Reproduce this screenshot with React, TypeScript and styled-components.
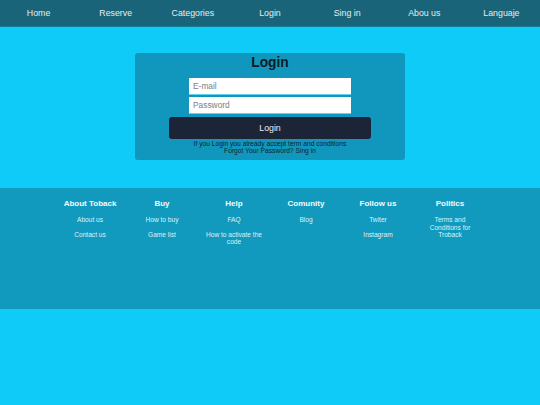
import React from "react";
import styled, { createGlobalStyle } from "styled-components";

const navItems = ["Home", "Reserve", "Categories", "Login", "Sing in", "Abou us", "Languaje"];

const footerColumns = [
  { title: "About Toback", links: ["About us", "Contact us"] },
  { title: "Buy", links: ["How to buy", "Game list"] },
  { title: "Help", links: ["FAQ", "How to activate the code"] },
  { title: "Comunity", links: ["Blog"] },
  { title: "Follow us", links: ["Twiter", "Instagram"] },
  { title: "Politics", links: ["Terms and Conditions for Troback"] },
];

const App: React.FC = () => {
  return (
    <>
      <GlobalStyle />
      <Page>
        <NavBar>
          {navItems.map((item) => (
            <NavItem key={item}>{item}</NavItem>
          ))}
        </NavBar>

        <Main>
          <LoginCard>
            <Title>Login</Title>
            <Fields>
              <Input type="email" placeholder="E-mail" />
              <Input type="password" placeholder="Password" />
            </Fields>
            <LoginButton>Login</LoginButton>
            <Note>
              If you Login you already accept term and conditions
              <br />
              Forgot Your Password? Sing in
            </Note>
          </LoginCard>
        </Main>

        <Footer>
          <FooterGrid>
            {footerColumns.map((col) => (
              <FooterColumn key={col.title}>
                <FooterTitle>{col.title}</FooterTitle>
                {col.links.map((link) => (
                  <FooterLink key={link}>{link}</FooterLink>
                ))}
              </FooterColumn>
            ))}
          </FooterGrid>
        </Footer>
      </Page>
    </>
  );
};

export default App;

// --- Styled Components ---
const GlobalStyle = createGlobalStyle`
  html, body {
    margin: 0;
    padding: 0;
    background: #0ecbf8;
    font-family: "Liberation Sans", Arial, sans-serif;
  }
  * {
    box-sizing: border-box;
  }
`;

const Page = styled.div`
  min-height: 405px;
  background: #0ecbf8;
`;

const NavBar = styled.nav`
  display: flex;
  height: 27px;
  background: #196478;
  border-bottom: 1px solid #137d97;
`;

const NavItem = styled.a`
  flex: 1;
  display: flex;
  align-items: center;
  justify-content: center;
  color: #e6eef1;
  font-size: 8.8px;
`;

const Main = styled.main`
  display: flex;
  justify-content: center;
  padding: 26px 0 28px;
`;

const LoginCard = styled.section`
  width: 270px;
  height: 107px;
  background: #1197bd;
  border-radius: 3px;
  display: flex;
  flex-direction: column;
  align-items: center;
  padding-top: 2px;
`;

const Title = styled.h2`
  margin: 0;
  font-size: 13.8px;
  line-height: 16px;
  font-weight: bold;
  color: #0c1a26;
`;

const Fields = styled.div`
  display: flex;
  flex-direction: column;
  gap: 2px;
  margin-top: 7px;
`;

const Input = styled.input`
  width: 162px;
  height: 17px;
  border: none;
  border-bottom: 1px solid #63d3ef;
  background: #ffffff;
  padding: 0 4px;
  font-family: "Liberation Sans", Arial, sans-serif;
  font-size: 8.4px;
  outline: none;
  &::placeholder {
    color: #7d7d7d;
  }
`;

const LoginButton = styled.button`
  width: 202px;
  height: 22px;
  margin-top: 3px;
  background: #1c2437;
  color: #e8eaee;
  border: none;
  border-radius: 3px;
  font-family: "Liberation Sans", Arial, sans-serif;
  font-size: 8.8px;
  cursor: pointer;
`;

const Note = styled.p`
  margin: 1px 0 0;
  font-size: 6.7px;
  line-height: 7.4px;
  text-align: center;
  color: #0d2433;
`;

const Footer = styled.footer`
  height: 121px;
  background: #1199be;
  padding-top: 11px;
`;

const FooterGrid = styled.div`
  width: 432px;
  margin: 0 auto;
  display: grid;
  grid-template-columns: repeat(6, 1fr);
`;

const FooterColumn = styled.div`
  display: flex;
  flex-direction: column;
  align-items: center;
  text-align: center;
`;

const FooterTitle = styled.h4`
  margin: 0 0 7px;
  font-size: 8px;
  line-height: 10px;
  font-weight: bold;
  color: #f4fbfd;
`;

const FooterLink = styled.a`
  display: block;
  max-width: 62px;
  margin-bottom: 7px;
  font-size: 6.6px;
  line-height: 7.6px;
  color: #dcf3f9;
`;
